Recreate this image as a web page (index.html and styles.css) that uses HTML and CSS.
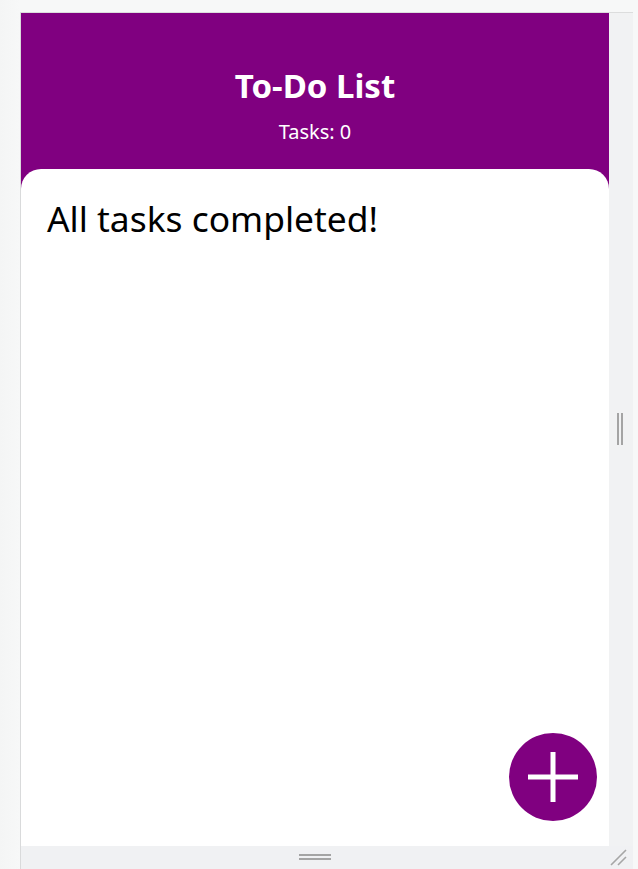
FILE: index.html
```html
<!DOCTYPE html>
<html>
<head>
<meta charset="utf-8">
<link rel="stylesheet" href="styles.css">
</head>
<body>
<div class="frame">
  <div class="panel">
    <header class="header">
      <h1 class="title">To-Do List</h1>
      <div class="count">Tasks: 0</div>
    </header>
    <main class="content">
      <p class="empty">All tasks completed!</p>
    </main>
    <button class="fab" aria-label="Add task">
      <svg width="52" height="52" viewBox="0 0 52 52"><path d="M26 1V51M1 26H51" stroke="#fff" stroke-width="5"/></svg>
    </button>
  </div>
  <div class="side"><span class="vgrip"></span></div>
  <div class="bottom"><span class="hgrip"></span></div>
  <div class="corner">
    <svg width="20" height="20" viewBox="0 0 20 20"><path d="M2 18L17 3M9 18L17 10" stroke="#a6a6a6" stroke-width="1.6"/></svg>
  </div>
</div>
</body>
</html>
```
FILE: styles.css
```css
html, body {
  margin: 0;
  padding: 0;
  height: 100%;
  background: linear-gradient(90deg, #f4f5f5 0, #f7f8f8 20px);
  font-family: "Noto Sans", "Open Sans", sans-serif;
  overflow: hidden;
}
.frame {
  display: grid;
  grid-template-columns: 588px 24px;
  grid-template-rows: 833px 23px;
  margin-left: 20px;
  margin-top: 12px;
  border-left: 1px solid #d9dadb;
  border-top: 1px solid #dcdddd;
  width: max-content;
}
.panel {
  grid-column: 1;
  grid-row: 1;
  position: relative;
  background: #800080;
  display: flex;
  flex-direction: column;
}
.header {
  height: 156px;
  box-sizing: border-box;
  padding-top: 51px;
  text-align: center;
  color: #fff;
}
.title {
  margin: 0;
  font-size: 33px;
  font-weight: 700;
  line-height: 44px;
}
.count {
  font-size: 20px;
  line-height: 24px;
  margin-top: 12px;
}
.content {
  flex: 1;
  background: #fff;
  border-radius: 20px 20px 0 0;
  padding: 26px 26px;
}
.empty {
  margin: 0;
  font-size: 35.4px;
  line-height: 46px;
  color: #000;
}
.fab {
  position: absolute;
  right: 12px;
  bottom: 25px;
  width: 88px;
  height: 88px;
  border-radius: 50%;
  border: none;
  background: #800080;
  padding: 0;
  display: flex;
  align-items: center;
  justify-content: center;
}
.side {
  grid-column: 2;
  grid-row: 1;
  background: #f1f2f3;
  display: flex;
  align-items: center;
  padding-left: 8px;
}
.vgrip {
  width: 2px;
  height: 32px;
  border-left: 2px solid #a4a4a4;
  border-right: 2px solid #a4a4a4;
  box-sizing: content-box;
  margin-top: -2px;
}
.bottom {
  grid-column: 1;
  grid-row: 2;
  background: #f0f1f3;
  display: flex;
  justify-content: center;
  padding-top: 8px;
}
.hgrip {
  width: 32px;
  height: 2px;
  border-top: 2px solid #a4a4a4;
  border-bottom: 2px solid #a4a4a4;
}
.corner {
  grid-column: 2;
  grid-row: 2;
  background: #f0f1f3;
  display: flex;
  align-items: flex-end;
  justify-content: flex-end;
  padding: 0 4px 2px 0;
}
```
